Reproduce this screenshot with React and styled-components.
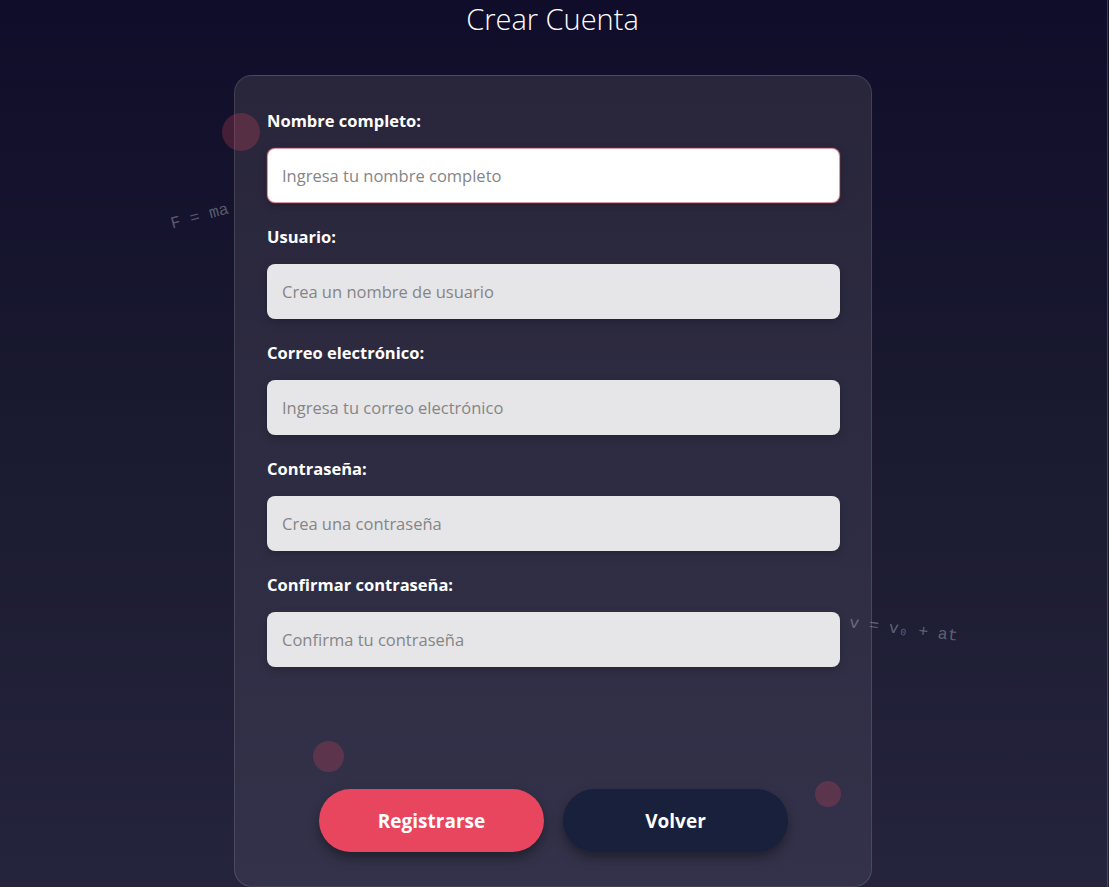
import React from "react";
import styled, { createGlobalStyle } from "styled-components";

const GlobalStyle = createGlobalStyle`
  html, body { margin: 0; padding: 0; }
  body {
    min-height: 887px;
    background: linear-gradient(180deg, #100d2a 0%, #1a1a30 50%, #25243d 100%);
    font-family: "Open Sans", "Noto Sans", sans-serif;
    overflow: hidden;
  }
`;

const Page = styled.div`
  position: relative;
  height: 887px;
  display: flex;
  flex-direction: column;
  align-items: center;
  overflow: hidden;
`;

const Title = styled.h1`
  margin: 0 4px 0 0;
  font-size: 29px;
  font-weight: 300;
  color: #ffffff;
  line-height: 38px;
`;

const Card = styled.form`
  position: relative;
  margin-top: 37px;
  margin-right: 3px;
  width: 638px;
  height: 840px;
  box-sizing: border-box;
  padding: 35px 31px 0 32px;
  border: 1px solid rgba(255, 255, 255, 0.12);
  border-radius: 18px;
  background: linear-gradient(180deg, #29263b 0%, #33324a 100%);
  display: flex;
  flex-direction: column;
`;

const Field = styled.div`
  display: flex;
  flex-direction: column;
  margin-bottom: 24px;
`;

const Label = styled.label`
  font-size: 16.5px;
  font-weight: 700;
  color: #ffffff;
  line-height: 20px;
  margin-bottom: 17px;
`;

const Input = styled.input`
  height: 55px;
  box-sizing: border-box;
  padding: 0 14px;
  border-radius: 8px;
  border: 1px solid ${(p) => (p.$focused ? "rgba(200, 80, 100, 0.6)" : "transparent")};
  background: ${(p) => (p.$focused ? "#ffffff" : "#e6e5e8")};
  box-shadow: ${(p) =>
    p.$focused
      ? "0 0 0 1px rgba(200,80,100,0.2), 0 3px 8px rgba(0,0,0,0.25)"
      : "0 3px 8px rgba(0,0,0,0.22)"};
  font-family: "Open Sans", "Noto Sans", sans-serif;
  font-size: 16.5px;
  color: #333;
  outline: none;
  &::placeholder { color: #858585; }
`;

const Actions = styled.div`
  margin-top: 98px;
  display: flex;
  justify-content: center;
  gap: 19px;
`;

const Button = styled.button`
  width: 225px;
  height: 63px;
  border: none;
  border-radius: 32px;
  background: ${(p) => (p.$primary ? "#e8465f" : "#18203b")};
  color: #ffffff;
  font-family: "Open Sans", "Noto Sans", sans-serif;
  font-size: 19px;
  font-weight: 700;
  box-shadow: 0 6px 12px rgba(0, 0, 0, 0.35);
  cursor: pointer;
`;

const Bubble = styled.span`
  position: absolute;
  border-radius: 50%;
  background: rgba(200, 70, 90, 0.28);
  pointer-events: none;
`;

const Formula = styled.span`
  position: absolute;
  z-index: 2;
  font-family: "Liberation Mono", "DejaVu Sans Mono", monospace;
  font-size: 16.5px;
  color: rgba(200, 200, 215, 0.4);
  white-space: nowrap;
  pointer-events: none;
`;

const EdgeLine = styled.div`
  position: absolute;
  top: 0;
  right: 1px;
  width: 1px;
  height: 100%;
  background: rgba(120, 120, 140, 0.45);
`;

const fields = [
  { label: "Nombre completo:", ph: "Ingresa tu nombre completo", focused: true },
  { label: "Usuario:", ph: "Crea un nombre de usuario" },
  { label: "Correo electrónico:", ph: "Ingresa tu correo electrónico", type: "email" },
  { label: "Contraseña:", ph: "Crea una contraseña", type: "password" },
  { label: "Confirmar contraseña:", ph: "Confirma tu contraseña", type: "password" },
];

export default function App() {
  return (
    <>
      <GlobalStyle />
      <Page>
        <Title>Crear Cuenta</Title>
        <Card onSubmit={(e) => e.preventDefault()}>
          {fields.map((f) => (
            <Field key={f.label}>
              <Label>{f.label}</Label>
              <Input type={f.type || "text"} placeholder={f.ph} $focused={f.focused} />
            </Field>
          ))}
          <Actions>
            <Button type="submit" $primary>Registrarse</Button>
            <Button type="button">Volver</Button>
          </Actions>
        </Card>
        <Formula style={{ left: 170, top: 207, transform: "rotate(-15deg)" }}>F = ma</Formula>
        <Formula style={{ left: 849, top: 620, transform: "rotate(7deg)" }}>v = v₀ + at</Formula>
        <Bubble style={{ left: 222, top: 113, width: 38, height: 38 }} />
        <Bubble style={{ left: 313, top: 741, width: 31, height: 31 }} />
        <Bubble style={{ left: 815, top: 781, width: 26, height: 26 }} />
        <EdgeLine />
      </Page>
    </>
  );
}
